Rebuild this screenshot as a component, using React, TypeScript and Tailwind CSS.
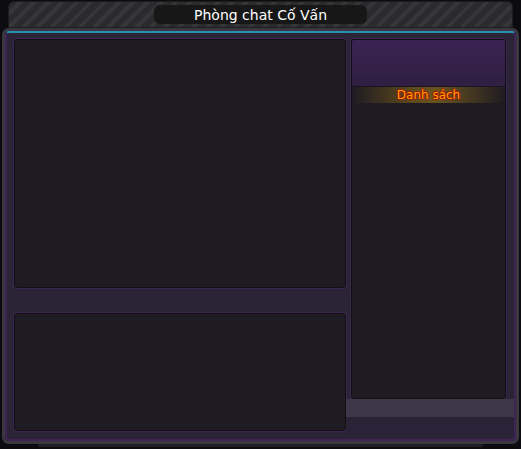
import React from "react";

const font = { fontFamily: '"DejaVu Sans", "Noto Sans", sans-serif' };

export default function App() {
  return (
    <div className="w-[521px] h-[449px] bg-[#0b0b10] overflow-hidden flex flex-col" style={font}>
      {/* title bar */}
      <div className="ml-[8px] mt-[1px] w-[505px] h-[27px] rounded-t-[6px] border border-[#1c1c1e] bg-[repeating-linear-gradient(135deg,#2b2b2d_0px,#2b2b2d_6px,#363638_6px,#363638_10px)] flex justify-center pt-[3px]">
        <div className="w-[213px] h-[19px] rounded-[6px] bg-[#171717] flex items-center justify-center text-[14px] leading-none text-white">
          Phòng chat Cố Vấn
        </div>
      </div>

      {/* main frame */}
      <div className="mx-[2px] h-[416px] rounded-[7px] border-[3px] border-[#39383e] bg-[#19161d]">
        <div className="h-full rounded-[4px] border-2 border-[#3e2456] border-t-[#2a8fb0] bg-[#2b2437] flex pl-[7px] pt-[6px] pb-[5px]">
          {/* left column */}
          <div className="w-[332px] flex flex-col">
            <div className="h-[249px] rounded-[3px] border border-[#111015] bg-[#1f1b22] shadow-[0_0_0_1px_#3a2550]" />
            <div className="h-[25px]" />
            <div className="h-[118px] rounded-[3px] border border-[#111015] bg-[#1f1b22] shadow-[0_0_0_1px_#3a2550]" />
          </div>

          {/* right column */}
          <div className="flex-1 flex flex-col pl-[5px]">
            <div className="w-[155px] h-[360px] rounded-[3px] border border-[#111015] bg-[#1f1b22] flex flex-col overflow-hidden shadow-[0_0_0_1px_#3a2550]">
              <div className="h-[47px] bg-[linear-gradient(#3a2352,#2f1f42)] border-b border-[#1a1420]" />
              <div className="h-[16px] bg-[linear-gradient(90deg,#1f1b22_0%,#5e4a1c_40%,#6a5420_55%,#1f1b22_100%)] flex items-center justify-center">
                <span className="text-[12px] leading-none text-[#ffa200] [text-shadow:1px_0_#a21400,-1px_0_#a21400,0_1px_#a21400,0_-1px_#a21400]">
                  Danh sách
                </span>
              </div>
              <div className="flex-1" />
            </div>
            <div className="h-[18px] -ml-[5px] bg-[#3e3749]" />
            <div className="flex-1 -ml-[5px] bg-[#2a2236]" />
          </div>
        </div>
      </div>
      <div className="mx-[38px] w-[445px] h-[3px] bg-[#1e1d22]" />
    </div>
  );
}
